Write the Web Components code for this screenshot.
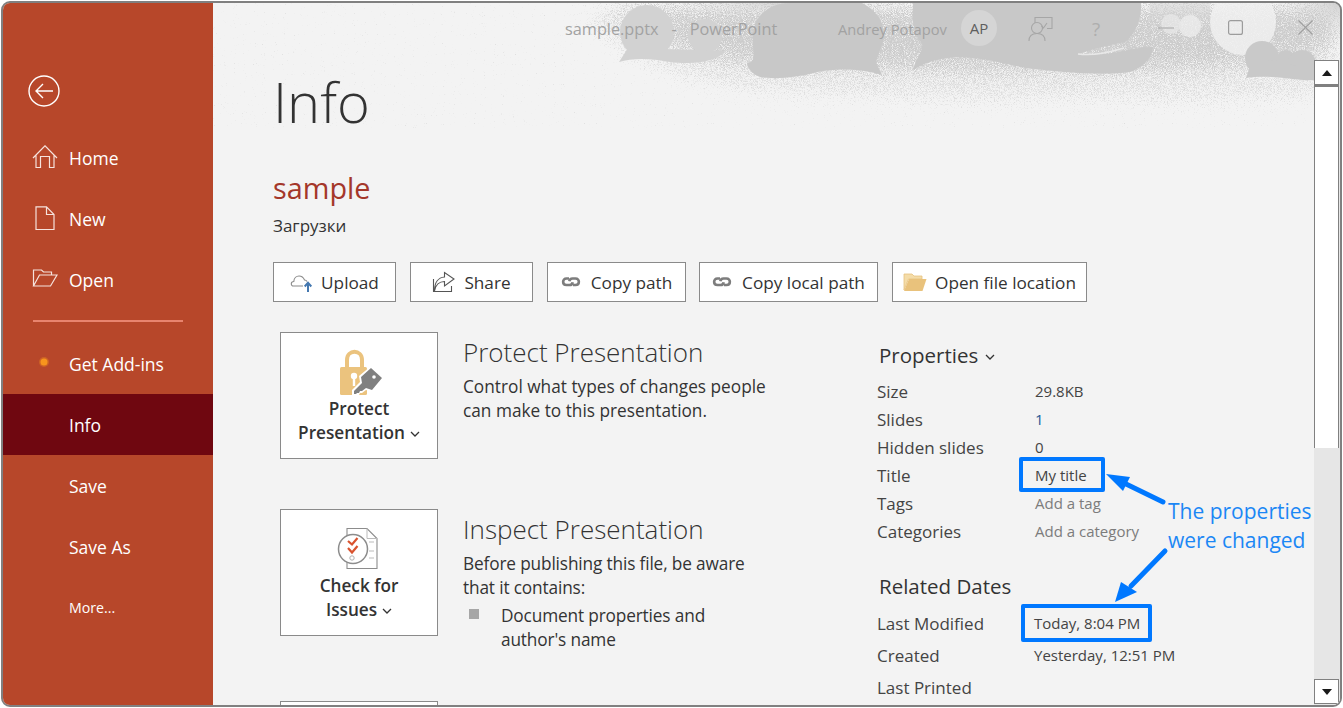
<!DOCTYPE html>
<html>
<head>
<meta charset="utf-8">
<title>sample.pptx - PowerPoint</title>
<style>
  html, body { margin: 0; height: 100%; background: #fff; overflow: hidden; }
  body { font-family: "Open Sans", "Noto Sans", sans-serif; color: #333; }
  .chev { margin-left: 5px; vertical-align: 2px; }
  .tight { letter-spacing: -0.15px; }
</style>
</head>
<body>
<ppt-window>
  <ppt-sidebar slot="side">
    <ppt-nav-item icon="home">Home</ppt-nav-item>
    <ppt-nav-item icon="new">New</ppt-nav-item>
    <ppt-nav-item icon="open">Open</ppt-nav-item>
    <ppt-nav-rule></ppt-nav-rule>
    <ppt-nav-item icon="dot">Get Add-ins</ppt-nav-item>
    <ppt-nav-item active>Info</ppt-nav-item>
    <ppt-nav-item>Save</ppt-nav-item>
    <ppt-nav-item>Save As</ppt-nav-item>
    <ppt-nav-item small>More...</ppt-nav-item>
  </ppt-sidebar>

  <ppt-backdrop slot="backdrop"></ppt-backdrop>
  <ppt-titlebar slot="title"></ppt-titlebar>

  <ppt-info-page slot="page">
    <ppt-action-button slot="actions" icon="upload" gap="7" style="width:123px">Upload</ppt-action-button>
    <ppt-action-button slot="actions" icon="share" gap="8" style="width:123px">Share</ppt-action-button>
    <ppt-action-button slot="actions" icon="link" gap="10" style="width:139px">Copy path</ppt-action-button>
    <ppt-action-button slot="actions" icon="link" gap="10" style="width:179px;margin-left:-1px">Copy local path</ppt-action-button>
    <ppt-action-button slot="actions" icon="folder" gap="8" style="width:195px">Open file location</ppt-action-button>

    <ppt-info-section slot="sections" icon="lock" heading="Protect Presentation">
      <span slot="label">Protect<br>Presentation<svg class="chev" width="10" height="6" viewBox="0 0 10 6" fill="none" stroke="#333" stroke-width="1.3"><path d="M1 1l4 4 4-4"/></svg></span>
      Control what types of changes people<br>can make to this presentation.
    </ppt-info-section>
    <ppt-info-section slot="sections" icon="check" heading="Inspect Presentation">
      <span slot="label">Check for<br>Issues<svg class="chev" width="10" height="6" viewBox="0 0 10 6" fill="none" stroke="#333" stroke-width="1.3"><path d="M1 1l4 4 4-4"/></svg></span>
      <span class="tight">Before publishing this file, be aware<br>that it contains:</span>
      <ppt-bullet><span class="tight">Document properties and<br>author's name</span></ppt-bullet>
    </ppt-info-section>
    <ppt-info-section slot="sections" style="margin-top:-1px"></ppt-info-section>

    <ppt-properties slot="props"></ppt-properties>
  </ppt-info-page>

  <ppt-scrollbar slot="scroll"></ppt-scrollbar>
  <ppt-callouts slot="overlay"></ppt-callouts>
</ppt-window>

<script>
const ICONS = {
  home: `<svg width="26" height="26" viewBox="0 0 26 26" fill="none" stroke="#f6e3dd" stroke-width="1.2"><path d="M1 13 13 .8 25 13M4 10.500V22.500h4.500V11.500h9V22.500H22V10.500"/></svg>`,
  new: `<svg width="26" height="26" viewBox="0 0 26 26" fill="none" stroke="#f6e3dd" stroke-width="1.2"><path d="M4 .8H14.500L22 8.500V23.500H4zM14.500 .8V8.500H22"/></svg>`,
  open: `<svg width="26" height="26" viewBox="0 0 26 26" fill="none" stroke="#f6e3dd" stroke-width="1.2"><path d="M1.500 19V3h8l2 2h8v3M1.500 19h17L25 8H7.500z"/></svg>`,
  dot: `<svg width="26" height="26" viewBox="0 0 26 26"><circle cx="12" cy="11" r="5" fill="#f7941d" opacity=".35"/><circle cx="12" cy="11" r="3.500" fill="#f7941d"/></svg>`,
  upload: `<svg width="24" height="22" viewBox="0 0 24 22" fill="none"><path d="M13 15H3.500C.500 15 .500 10.500 3.800 10.500 4 7 6.500 5 9 5c2.500 0 4.500 1.500 5.500 4 1 0 2 .5 2.500 1.500" stroke="#8a8a8a" stroke-width="1.1"/><path d="M18 21v-8M14.700 15.500 18 11.800l3.300 3.700" stroke="#4478b0" stroke-width="2"/></svg>`,
  share: `<svg width="24" height="22" viewBox="0 0 24 22" fill="none" stroke="#555" stroke-width="1.1"><path d="M1.500 8v12.500h18V15"/><path d="M2.500 20c1-6 5-9.500 10-9.500V15L22 8l-9.500-6.500V6C6 6.500 2.500 12 2.500 20z"/></svg>`,
  link: `<svg width="20" height="14" viewBox="0 0 20 14" fill="none" stroke="#7d7d7d" stroke-width="2.6"><path d="M8 3.500H5.500C1 3.500 1 10 5.500 10H8.500c2 0 3-1.500 3.200-2.800"/><path d="M12 10h2.500c4.500 0 4.500-6.500 0-6.500H11.500c-2 0-3 1.500-3.200 2.800"/></svg>`,
  folder: `<svg width="24" height="20" viewBox="0 0 24 20"><path d="M1 18V2h8l2 2h8v3H5.500L1 18z" fill="#f4dca8" stroke="#e7c27f" stroke-width=".8"/><path d="M1 19 6 7h17.500l-4 12z" fill="#e9c27c"/></svg>`,
  lock: `<svg class="lock" width="46" height="46" viewBox="0 0 46 46"><path d="M8 18V11C8 0 23 0 23 11v7" fill="none" stroke="#ebc37e" stroke-width="4"/><rect x="1" y="18" width="27" height="28" rx="1.5" fill="#ebc37e"/><circle cx="15" cy="27" r="3.2" fill="#fff"/><rect x="13.800" y="28" width="2.400" height="9" fill="#fff"/><path d="M13 46 13 41 21 33 20 27 32 17 45 29 33 43 27 41 23 44 21 44 20 46z" fill="#fff"/><path d="M15 45 15 42 23 34 22 28 32 19 43 29 33 41 27 39 23 42 21 42 20 44 18 44 17 45z" fill="#808080"/><circle cx="35" cy="28" r="1.800" fill="#fff"/></svg>`,
  check: `<svg class="check" width="44" height="44" viewBox="0 0 44 44" fill="none"><path d="M10 1.500H30L40 11.500V41.500H10z" stroke="#8c8c8c" stroke-width="1.1" fill="#fff"/><path d="M30 1.500V11.500H40" stroke="#bbb" stroke-width="1"/><path d="M32 15h5M32 24h5M32 31h5" stroke="#bbb" stroke-width="1"/><circle cx="16" cy="22" r="14.500" fill="#fff" stroke="#8c8c8c" stroke-width="1.5"/><path d="M11 14l4 3.500 5.500-6.500M11 21l4 4.500 5.500-6.500" stroke="#d9532f" stroke-width="2.2"/><circle cx="15" cy="31" r="2.200" stroke="#b0b0b0" stroke-width="1"/></svg>`
};

class PptWindow extends HTMLElement {
  constructor() {
    super();
    this.attachShadow({ mode: 'open' }).innerHTML = `
    <style>
      :host {
        display: flex;
        position: relative;
        box-sizing: border-box;
        width: 1341px;
        height: 706px;
        margin: 1px;
        border: 2px solid #808080;
        border-radius: 9px;
        overflow: hidden;
        background: #f3f3f3;
      }
      .main {
        position: relative;
        flex: 1;
        display: flex;
        min-width: 0;
      }
      .column {
        position: relative;
        flex: 1;
        min-width: 0;
        display: flex;
        flex-direction: column;
      }
    </style>
    <slot name="side"></slot>
    <div class="main">
      <slot name="backdrop"></slot>
      <div class="column">
        <slot name="title"></slot>
        <slot name="page"></slot>
      </div>
      <slot name="scroll"></slot>
    </div>
    <slot name="overlay"></slot>`;
  }
}

class PptSidebar extends HTMLElement {
  constructor() {
    super();
    this.attachShadow({ mode: 'open' }).innerHTML = `
    <style>
      :host {
        display: flex;
        flex-direction: column;
        flex: 0 0 210px;
        background: #b7472a;
        color: #fff;
      }
      .back {
        height: 124px;
        padding: 72px 0 0 25px;
        box-sizing: border-box;
      }
      svg { display: block; }
    </style>
    <div class="back">
      <svg width="32" height="32" viewBox="0 0 32 32" fill="none" stroke="#fff" stroke-width="1.4">
        <circle cx="16" cy="16" r="15"/>
        <path d="M25 16H8M15 9l-7 7 7 7"/>
      </svg>
    </div>
    <slot></slot>`;
  }
}

class PptNavItem extends HTMLElement {
  constructor() {
    super();
    const icon = ICONS[this.getAttribute('icon')] || '';
    this.attachShadow({ mode: 'open' }).innerHTML = `
    <style>
      :host {
        display: flex;
        align-items: center;
        height: 61px;
        font-size: 17.5px;
        color: #fff;
      }
      :host([active]) { background: #6f0710; }
      :host([small]) { font-size: 14.2px; }
      .icon {
        flex: 0 0 66px;
        box-sizing: border-box;
        padding-left: 29px;
        height: 26px;
      }
    </style>
    <span class="icon">${icon}</span><slot></slot>`;
  }
}

class PptNavRule extends HTMLElement {
  constructor() {
    super();
    this.attachShadow({ mode: 'open' }).innerHTML = `
    <style>
      :host {
        display: block;
        height: 2px;
        margin: 10px 30px 11px 30px;
        background: #e8846e;
      }
    </style>`;
  }
}

class PptBackdrop extends HTMLElement {
  constructor() {
    super();
    this.attachShadow({ mode: 'open' }).innerHTML = `
    <style>
      :host {
        position: absolute;
        left: 0;
        top: 0;
        width: 1127px;
        height: 125px;
        pointer-events: none;
      }
      svg { display: block; }
    </style>
    <svg width="1127" height="125" viewBox="213 3 1127 125">
      <defs>
        <filter id="stipple" filterUnits="userSpaceOnUse" x="213" y="3" width="1127" height="125" color-interpolation-filters="sRGB">
          <feGaussianBlur in="SourceAlpha" stdDeviation="14" result="soft"/>
          <feTurbulence type="fractalNoise" baseFrequency="1.1" numOctaves="1" seed="4" result="grain"/>
          <feColorMatrix in="grain" type="matrix" values="0 0 0 0 0  0 0 0 0 0  0 0 0 0 0  1 0 0 0 0" result="grainAlpha"/>
          <feComposite in="soft" in2="grainAlpha" operator="arithmetic" k1="0" k2="0.42" k3="1" k4="-0.70" result="cut"/>
          <feComponentTransfer in="cut" result="dots">
            <feFuncA type="linear" slope="4"/>
          </feComponentTransfer>
          <feFlood flood-color="#cccccc"/>
          <feComposite in2="dots" operator="in"/>
        </filter>
        <filter id="sparse" filterUnits="userSpaceOnUse" x="213" y="3" width="1127" height="125" color-interpolation-filters="sRGB">
          <feGaussianBlur in="SourceAlpha" stdDeviation="10" result="soft"/>
          <feTurbulence type="fractalNoise" baseFrequency="1.3" numOctaves="1" seed="9" result="grain"/>
          <feColorMatrix in="grain" type="matrix" values="0 0 0 0 0  0 0 0 0 0  0 0 0 0 0  1 0 0 0 0" result="grainAlpha"/>
          <feComposite in="soft" in2="grainAlpha" operator="arithmetic" k1="0" k2="0.3" k3="1" k4="-0.73" result="cut"/>
          <feComponentTransfer in="cut" result="dots">
            <feFuncA type="linear" slope="5"/>
          </feComponentTransfer>
          <feFlood flood-color="#dedede"/>
          <feComposite in2="dots" operator="in"/>
        </filter>
        <radialGradient id="corner" cx="1" cy="0" r="1">
          <stop offset="0" stop-color="#d0d0d0"/>
          <stop offset="1" stop-color="#f3f3f3" stop-opacity="0"/>
        </radialGradient>
        <radialGradient id="band" cx=".5" cy="0" r=".5">
          <stop offset="0" stop-color="#d4d4d4"/>
          <stop offset="1" stop-color="#f3f3f3" stop-opacity="0"/>
        </radialGradient>
      </defs>
      <rect x="640" y="3" width="280" height="40" fill="url(#band)"/>
      <rect x="1260" y="3" width="80" height="50" fill="url(#corner)"/>
      <g filter="url(#sparse)">
        <path d="M590 3H1340V95C1300 105 1220 110 1100 104 1000 110 880 104 760 96 680 90 620 60 590 30z"/>
      </g>
      <g filter="url(#stipple)">
        <path d="M600 3H1340V50C1300 68 1220 76 1100 76 1000 78 880 76 760 70 690 64 640 40 620 24z"/>
      </g>
      <path d="M1150 3H1210V18H1150z" fill="#d4d4d4" opacity=".5"/>
      <circle cx="1243" cy="22" r="33" fill="#f0f0f0" opacity=".85"/>
      <circle cx="1190" cy="26" r="11" fill="#ececec" opacity=".8"/>
      <circle cx="1171" cy="24" r="10" fill="#e6e6e6" opacity=".8"/>
      <g fill="#d2d2d2">
        <circle cx="647" cy="32" r="27"/>
        <circle cx="705" cy="36" r="17"/>
        <path d="M619 62 628 48 700 50 725 51C722 58 700 66 670 62 650 58 632 58 619 62z"/>
      </g>
      <path d="M747 63C757 62 752 55 753 33 755 15 770 3 790 3H862C880 12 890 30 880 50L876 62 882 75C860 68 840 69 822 71 800 77 775 80 760 77 752 74 748 69 747 63z" fill="#c8c8c8"/>
      <path d="M913 70C915 60 924 50 922 43 912 34 912 15 913 3H1141C1142 20 1135 34 1125 42 1105 46 1090 50 1078 54 1105 58 1135 46 1153 47 1153 57 1143 68 1130 72 1100 76 1060 72 1026 68 1000 63 985 58 960 57 943 57 925 62 913 70z" fill="#c8c8c8"/>
      <path d="M1078 54C1095 56 1110 52 1124 48" stroke="#e8e8e8" stroke-width="1.5" fill="none"/>
      <g fill="#c9c9c9">
        <circle cx="1262" cy="58" r="17"/>
        <circle cx="1286" cy="60" r="10"/>
        <circle cx="1302" cy="64" r="14"/>
        <path d="M1246 78 1250 66 1270 60 1316 70 1320 80C1300 82 1275 74 1246 78z"/>
      </g>
    </svg>`;
  }
}

class PptTitlebar extends HTMLElement {
  constructor() {
    super();
    this.attachShadow({ mode: 'open' }).innerHTML = `
    <style>
      :host {
        display: flex;
        align-items: center;
        height: 51px;
        box-sizing: border-box;
        padding: 0 0 0 352px;
        color: #a2a2a2;
        position: relative;
      }
      .doc { font-size: 16.3px; word-spacing: 2.25px; width: 273px; white-space: pre; }
      .user { font-size: 14.7px; width: 123px; }
      .avatar {
        width: 36px;
        height: 36px;
        margin-top: -2px;
        border-radius: 50%;
        background: #d5d5d5;
        color: #5e5e5e;
        font-size: 15px;
        display: flex;
        align-items: center;
        justify-content: center;
      }
      .controls { display: flex; align-items: center; height: 100%; }
      svg { display: block; }
      .feedback { margin-left: 31px; }
      .help { margin-left: 38px; width: 14px; font-size: 19px; color: #aeaeae; }
      .min { margin-left: 52px; margin-top: -2px; }
      .max { margin-left: 54px; margin-top: -2px; }
      .close { margin-left: 55px; margin-top: -2px; }
    </style>
    <span class="doc">sample.pptx  -  PowerPoint</span>
    <span class="user">Andrey Potapov</span>
    <span class="avatar">AP</span>
    <div class="controls">
      <svg class="feedback" width="26" height="26" viewBox="0 0 26 26" fill="none" stroke="#a6a6a6" stroke-width="1.1">
        <path d="M7 7V1.500h17v11h-5M19 7l-3.500 5-2-2"/>
        <circle cx="9" cy="12" r="5.500"/>
        <path d="M1 25c0-5 3-7.500 8-7.500s8 2.500 8 7.500"/>
      </svg>
      <span class="help">?</span>
      <svg class="min" width="16" height="16" viewBox="0 0 16 16" stroke="#a4a4a4" stroke-width="1.2"><path d="M0 8h16"/></svg>
      <svg class="max" width="15" height="15" viewBox="0 0 15 15" fill="none" stroke="#9c9c9c" stroke-width="1.2"><rect x=".6" y=".6" width="13.8" height="13.8" rx="2"/></svg>
      <svg class="close" width="15" height="15" viewBox="0 0 15 15" stroke="#a0a0a0" stroke-width="1.2"><path d="M.5 .5l14 14M14.500 .5l-14 14"/></svg>
    </div>`;
  }
}

class PptInfoPage extends HTMLElement {
  constructor() {
    super();
    this.attachShadow({ mode: 'open' }).innerHTML = `
    <style>
      :host {
        display: block;
        position: relative;
        flex: 1;
        min-height: 0;
        padding-left: 60px;
        color: #333;
      }
      h1 {
        margin: 2px 0 0;
        font-weight: 300;
        font-size: 56px;
        line-height: 90px;
        color: #333;
      }
      h2 {
        margin: 24px 0 0;
        font-weight: 400;
        font-size: 28.8px;
        line-height: 36px;
        color: #a4372a;
      }
      .folder { font-size: 17px; line-height: 24px; margin-top: 8px; color: #333; }
      .actions { display: flex; gap: 14px; margin-top: 24px; }
      .body { display: flex; margin-top: 30px; }
      .sections { width: 597px; display: flex; flex-direction: column; gap: 50px; padding-left: 7px; }
    </style>
    <h1>Info</h1>
    <h2>sample</h2>
    <div class="folder">Загрузки</div>
    <div class="actions"><slot name="actions"></slot></div>
    <div class="body">
      <div class="sections"><slot name="sections"></slot></div>
      <slot name="props"></slot>
    </div>`;
  }
}

class PptActionButton extends HTMLElement {
  constructor() {
    super();
    const icon = ICONS[this.getAttribute('icon')] || '';
    const gap = this.getAttribute('gap') || 8;
    this.attachShadow({ mode: 'open' }).innerHTML = `
    <style>
      :host {
        display: inline-flex;
        align-items: center;
        justify-content: center;
        gap: ${gap}px;
        box-sizing: border-box;
        height: 40px;
        background: #fff;
        border: 1px solid #8a8a8a;
        font-size: 17.2px;
        color: #333;
        white-space: nowrap;
      }
      svg { display: block; }
    </style>
    ${icon}<slot></slot>`;
  }
}

class PptInfoSection extends HTMLElement {
  constructor() {
    super();
    const icon = ICONS[this.getAttribute('icon')] || '';
    const heading = this.getAttribute('heading') || '';
    this.attachShadow({ mode: 'open' }).innerHTML = `
    <style>
      :host {
        display: flex;
        gap: 25px;
        font-size: 17.25px;
        line-height: 24px;
        color: #333;
      }
      .tile {
        flex: 0 0 158px;
        box-sizing: border-box;
        height: 127px;
        padding-top: 16px;
        background: #fff;
        border: 1px solid #8a8a8a;
        display: flex;
        flex-direction: column;
        align-items: center;
        text-align: center;
        font-size: 17.2px;
        font-weight: 600;
        color: #333;
      }
      .tile svg { display: block; }
      .tile .lock { margin: 0 0 2px 6px; }
      .tile .check { margin: 1px 0 3px 0; }
      ::slotted([slot="label"]) { display: block; }
      h3 {
        margin: 0;
        font-weight: 300;
        font-size: 26px;
        line-height: 38px;
        color: #333;
      }
      .text { padding-top: 1px; }
      .copy { margin-top: 4px; }
    </style>
    <div class="tile">${icon}<slot name="label"></slot></div>
    <div class="text">
      <h3>${heading}</h3>
      <div class="copy"><slot></slot></div>
    </div>`;
  }
}

class PptBullet extends HTMLElement {
  constructor() {
    super();
    this.attachShadow({ mode: 'open' }).innerHTML = `
    <style>
      :host { display: flex; margin-top: 4px; }
      i {
        flex: 0 0 10px;
        height: 10px;
        margin: 5px 22px 0 6px;
        background: #a6a6a6;
      }
    </style>
    <i></i><div><slot></slot></div>`;
  }
}

class PptProperties extends HTMLElement {
  constructor() {
    super();
    this.attachShadow({ mode: 'open' }).innerHTML = `
    <style>
      :host {
        display: block;
        width: 420px;
        padding-top: 9px;
        font-size: 17px;
        color: #444;
      }
      h4 {
        margin: 0 0 0 2px;
        font-weight: 400;
        font-size: 20.5px;
        line-height: 28px;
        color: #333;
      }
      h4 svg { margin-left: 7px; vertical-align: 3px; }
      dl { margin: 0; display: grid; grid-template-columns: 158px 1fr; }
      .basic { margin-top: 8px; grid-auto-rows: 28px; }
      .dates { margin-top: 7px; grid-auto-rows: 32px; }
      dt, dd { margin: 0; display: flex; align-items: center; white-space: nowrap; }
      dd { font-size: 15px; color: #444; }
      .dates dd { margin-left: -1px; }
      .link { color: #1f5a96; }
      .hint { color: #7c7c7c; }
      .related { margin-top: 27px; }
    </style>
    <h4>Properties<svg width="10" height="6" viewBox="0 0 10 6" fill="none" stroke="#333" stroke-width="1.3"><path d="M1 1l4 4 4-4"/></svg></h4>
    <dl class="basic">
      <dt>Size</dt><dd>29.8KB</dd>
      <dt>Slides</dt><dd class="link">1</dd>
      <dt>Hidden slides</dt><dd>0</dd>
      <dt>Title</dt><dd>My title</dd>
      <dt>Tags</dt><dd class="hint">Add a tag</dd>
      <dt>Categories</dt><dd class="hint">Add a category</dd>
    </dl>
    <h4 class="related">Related Dates</h4>
    <dl class="dates">
      <dt>Last Modified</dt><dd>Today, 8:04 PM</dd>
      <dt>Created</dt><dd>Yesterday, 12:51 PM</dd>
      <dt>Last Printed</dt><dd></dd>
    </dl>`;
  }
}

class PptScrollbar extends HTMLElement {
  constructor() {
    super();
    this.attachShadow({ mode: 'open' }).innerHTML = `
    <style>
      :host {
        position: relative;
        display: flex;
        flex-direction: column;
        flex: 0 0 26px;
        margin-top: 57px;
        background: #e6e6e6;
      }
      .btn {
        box-sizing: border-box;
        width: 25px;
        height: 25px;
        background: #fff;
        border: 1px solid #808080;
        display: flex;
        align-items: center;
        justify-content: center;
      }
      .thumb {
        box-sizing: border-box;
        width: 25px;
        height: 363px;
        background: #fff;
        border: 1px solid #808080;
        border-top-width: 2px;
        border-bottom: 0;
      }
      .track { flex: 1; }
      .down { margin-bottom: 1px; }
      .arrow { width: 0; height: 0; border: 5.5px solid transparent; border-top: 0; border-bottom: 6px solid #1a1a1a; }
      .down .arrow { border-bottom: 0; border-top: 6px solid #1a1a1a; }
    </style>
    <div class="btn"><span class="arrow"></span></div>
    <div class="thumb"></div>
    <div class="track"></div>
    <div class="btn down"><span class="arrow"></span></div>`;
  }
}

class PptCallouts extends HTMLElement {
  constructor() {
    super();
    this.attachShadow({ mode: 'open' }).innerHTML = `
    <style>
      :host {
        position: absolute;
        left: -3px;
        top: -3px;
        width: 1343px;
        height: 708px;
        pointer-events: none;
      }
      .box {
        position: absolute;
        box-sizing: border-box;
        border: 4px solid #0078ff;
        border-radius: 2px;
      }
      .note {
        position: absolute;
        left: 1168px;
        top: 497px;
        font-size: 21px;
        line-height: 29px;
        color: #1b87f5;
        white-space: nowrap;
      }
      svg { position: absolute; left: 0; top: 0; }
    </style>
    <div class="box" style="left:1019px;top:457px;width:86px;height:35px"></div>
    <div class="box" style="left:1021px;top:604px;width:131px;height:38px"></div>
    <svg width="1343" height="708" viewBox="0 0 1343 708">
      <path d="M1163 502 1124 483" stroke="#0078ff" stroke-width="5" stroke-linecap="round"/>
      <path d="M1106 474 1130 477 1123 491z" fill="#0078ff"/>
      <path d="M1165 551 1131 586" stroke="#0078ff" stroke-width="5" stroke-linecap="round"/>
      <path d="M1115 602 1121 582 1137 592z" fill="#0078ff"/>
    </svg>
    <div class="note">The properties<br>were changed</div>`;
  }
}

customElements.define('ppt-window', PptWindow);
customElements.define('ppt-sidebar', PptSidebar);
customElements.define('ppt-nav-item', PptNavItem);
customElements.define('ppt-nav-rule', PptNavRule);
customElements.define('ppt-backdrop', PptBackdrop);
customElements.define('ppt-titlebar', PptTitlebar);
customElements.define('ppt-info-page', PptInfoPage);
customElements.define('ppt-action-button', PptActionButton);
customElements.define('ppt-info-section', PptInfoSection);
customElements.define('ppt-bullet', PptBullet);
customElements.define('ppt-properties', PptProperties);
customElements.define('ppt-scrollbar', PptScrollbar);
customElements.define('ppt-callouts', PptCallouts);
</script>
</body>
</html>
